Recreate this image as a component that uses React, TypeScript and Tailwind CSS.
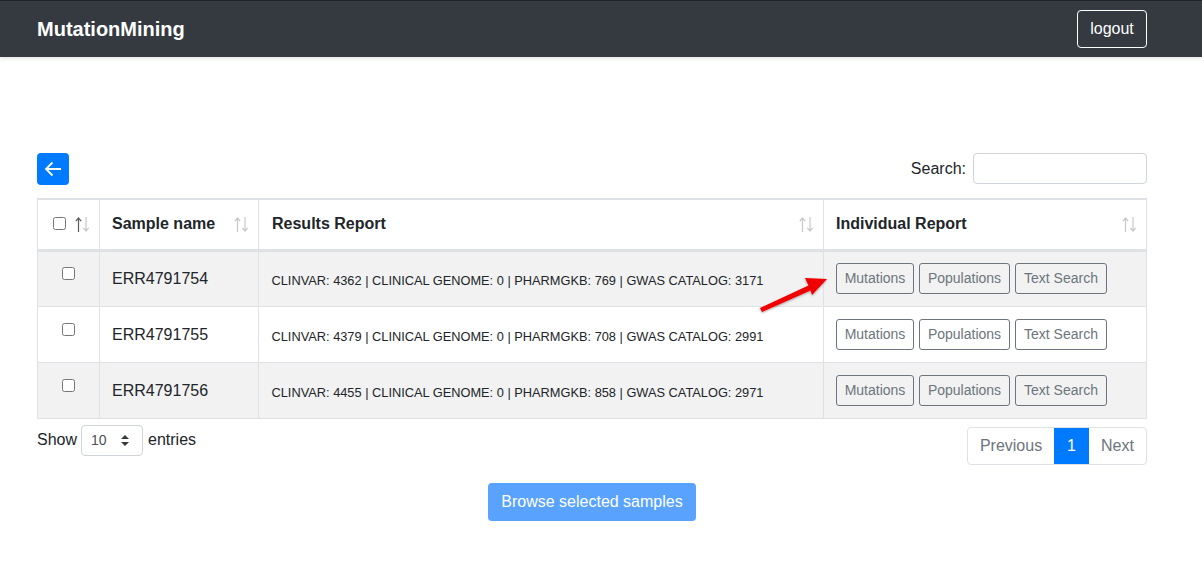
import type { ReactNode } from 'react';

type Sample = { name: string; clinvar: number; pharmgkb: number; gwas: number };

const samples: Sample[] = [
  { name: 'ERR4791754', clinvar: 4362, pharmgkb: 769, gwas: 3171 },
  { name: 'ERR4791755', clinvar: 4379, pharmgkb: 708, gwas: 2991 },
  { name: 'ERR4791756', clinvar: 4455, pharmgkb: 858, gwas: 2971 },
];

function SortArrows({ active = false }: { active?: boolean }) {
  return (
    <svg className="shrink-0" width="15" height="15" viewBox="0 0 15 15" fill="none" aria-hidden>
      <path
        d="M3.5 15V1M0.8 4.2L3.5 1L6.2 4.2"
        stroke={active ? '#5f5a55' : '#212529'}
        strokeOpacity={active ? 1 : 0.25}
        strokeWidth="1.2"
      />
      <path d="M11 0V14M8.3 10.8L11 14L13.7 10.8" stroke="#212529" strokeOpacity="0.25" strokeWidth="1.2" />
    </svg>
  );
}

function HeaderCell({ children, className = '' }: { children: ReactNode; className?: string }) {
  return (
    <th className={`border border-t-2 border-b-[3px] border-[#dee2e6] pr-[9px] text-left ${className}`}>
      <div className="flex items-center justify-between">{children}</div>
    </th>
  );
}

function OutlineButton({ label, width }: { label: string; width: string }) {
  return (
    <button
      type="button"
      className={`h-[31px] ${width} rounded-[3px] border border-[#6c757d] pb-px text-center text-sm text-[#6c757d]`}
    >
      {label}
    </button>
  );
}

export default function App() {
  return (
    <div className="relative min-h-[573px] bg-white font-['Liberation_Sans',Arial,sans-serif] text-base text-[#212529]">
      <nav className="flex h-[57px] items-center justify-between border-t border-t-[#212529] bg-[#343a40] pr-[55px] pl-[37px] shadow-[0_1px_4px_rgba(0,0,0,0.15)]">
        <span className="text-xl font-bold text-white">MutationMining</span>
        <button type="button" className="h-[38px] w-[70px] rounded border border-white text-white">
          logout
        </button>
      </nav>

      <main className="pt-[96px] pr-[55px] pl-[37px]">
        <div className="flex items-start justify-between">
          <button
            type="button"
            aria-label="Back"
            className="flex size-8 items-center justify-center rounded bg-[#007bff]"
          >
            <svg width="18" height="16" viewBox="0 0 18 16" fill="none" aria-hidden>
              <path d="M17 8H2M8.5 1.5L2 8l6.5 6.5" stroke="#fff" strokeWidth="1.8" />
            </svg>
          </button>
          <label className="flex items-center gap-[7px]">
            Search:
            <input type="text" className="h-[31px] w-[174px] rounded border border-[#ced4da] bg-white" />
          </label>
        </div>

        <table className="mt-[13px] w-[1109px] table-fixed border-collapse">
          <colgroup>
            <col className="w-[62px]" />
            <col className="w-[159px]" />
            <col className="w-[565px]" />
            <col className="w-[323px]" />
          </colgroup>
          <thead>
            <tr className="h-[51px]">
              <HeaderCell className="pl-[15px]">
                <input type="checkbox" className="-mt-0.5 size-[13px]" aria-label="Select all" />
                <SortArrows active />
              </HeaderCell>
              <HeaderCell className="pl-3">
                Sample name
                <SortArrows />
              </HeaderCell>
              <HeaderCell className="pl-[13px]">
                Results Report
                <SortArrows />
              </HeaderCell>
              <HeaderCell className="pl-3">
                Individual Report
                <SortArrows />
              </HeaderCell>
            </tr>
          </thead>
          <tbody>
            {samples.map((sample, index) => (
              <tr key={sample.name} className={index % 2 === 0 ? 'h-[56px] bg-[#f2f2f2]' : 'h-[56px] bg-white'}>
                <td className="border border-[#dee2e6] pb-[7px] text-center">
                  <input type="checkbox" className="size-[13px]" aria-label={`Select ${sample.name}`} />
                </td>
                <td className="border border-[#dee2e6] px-3 pt-px">{sample.name}</td>
                <td className="border border-[#dee2e6] pt-[5px] pr-3 pl-[12.5px] text-[12.8px]">
                  CLINVAR: {sample.clinvar} | CLINICAL GENOME: 0 | PHARMGKB: {sample.pharmgkb} | GWAS CATALOG:{' '}
                  {sample.gwas}
                </td>
                <td className="border border-[#dee2e6] px-3">
                  <div className="flex gap-[5px]">
                    <OutlineButton label="Mutations" width="w-[78px]" />
                    <OutlineButton label="Populations" width="w-[91px]" />
                    <OutlineButton label="Text Search" width="w-[92px]" />
                  </div>
                </td>
              </tr>
            ))}
          </tbody>
        </table>

        <div className="flex items-start justify-between">
          <div className="mt-[6px] flex items-center">
            Show
            <span className="relative mr-[5px] ml-1 flex h-[31px] w-[62px] items-center rounded border border-[#ced4da] pl-[9px] text-sm text-[#495057]">
              10
              <svg className="absolute right-[13px]" width="8" height="11" viewBox="0 0 8 11" aria-hidden>
                <path d="M4 0 L8 4 H0 Z M4 11 L0 7 H8 Z" fill="#343a40" />
              </svg>
            </span>
            entries
          </div>
          <div className="mt-2 flex h-[38px] overflow-hidden rounded border border-[#dee2e6] text-[#6c757d]">
            <span className="flex w-[86px] items-center justify-center">Previous</span>
            <span className="-my-px flex w-[35px] items-center justify-center bg-[#007bff] text-white">1</span>
            <span className="flex w-[57px] items-center justify-center">Next</span>
          </div>
        </div>

        <div className="mt-[18px] flex w-[1110px] justify-center">
          <button type="button" className="h-[38px] w-[208px] rounded bg-[#59a3ff] text-white">
            Browse selected samples
          </button>
        </div>
      </main>

      <svg className="absolute top-[270px] left-[755px]" width="80" height="45" viewBox="0 0 80 45" aria-hidden>
        <defs>
          <filter id="arrow-shadow" x="-20%" y="-20%" width="140%" height="150%">
            <feDropShadow dx="0" dy="1" stdDeviation="1" floodColor="#000" floodOpacity="0.35" />
          </filter>
        </defs>
        <path
          d="M5 38 L53.5 15.5 L50 8 L72 9 L57 25 L55.5 20.5 L7 42 Z"
          fill="#f00000"
          filter="url(#arrow-shadow)"
        />
      </svg>
    </div>
  );
}
